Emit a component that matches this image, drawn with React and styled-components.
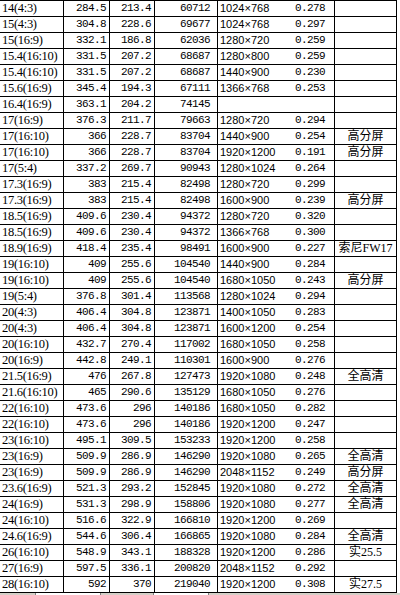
import React from 'react';
import styled, { createGlobalStyle } from 'styled-components';

const GlobalStyle = createGlobalStyle`
  html, body {
    margin: 0;
    padding: 0;
    background: #ffffff;
  }
  body {
    width: 400px;
    height: 595px;
    overflow: hidden;
  }
`;

const rows = [
  ['14(4:3)', '284.5', '213.4', '60712', '1024×768', '0.278', ''],
  ['15(4:3)', '304.8', '228.6', '69677', '1024×768', '0.297', ''],
  ['15(16:9)', '332.1', '186.8', '62036', '1280×720', '0.259', ''],
  ['15.4(16:10)', '331.5', '207.2', '68687', '1280×800', '0.259', ''],
  ['15.4(16:10)', '331.5', '207.2', '68687', '1440×900', '0.230', ''],
  ['15.6(16:9)', '345.4', '194.3', '67111', '1366×768', '0.253', ''],
  ['16.4(16:9)', '363.1', '204.2', '74145', '', '', ''],
  ['17(16:9)', '376.3', '211.7', '79663', '1280×720', '0.294', ''],
  ['17(16:10)', '366', '228.7', '83704', '1440×900', '0.254', '高分屏'],
  ['17(16:10)', '366', '228.7', '83704', '1920×1200', '0.191', '高分屏'],
  ['17(5:4)', '337.2', '269.7', '90943', '1280×1024', '0.264', ''],
  ['17.3(16:9)', '383', '215.4', '82498', '1280×720', '0.299', ''],
  ['17.3(16:9)', '383', '215.4', '82498', '1600×900', '0.239', '高分屏'],
  ['18.5(16:9)', '409.6', '230.4', '94372', '1280×720', '0.320', ''],
  ['18.5(16:9)', '409.6', '230.4', '94372', '1366×768', '0.300', ''],
  ['18.9(16:9)', '418.4', '235.4', '98491', '1600×900', '0.227', '索尼FW17'],
  ['19(16:10)', '409', '255.6', '104540', '1440×900', '0.284', ''],
  ['19(16:10)', '409', '255.6', '104540', '1680×1050', '0.243', '高分屏'],
  ['19(5:4)', '376.8', '301.4', '113568', '1280×1024', '0.294', ''],
  ['20(4:3)', '406.4', '304.8', '123871', '1400×1050', '0.283', ''],
  ['20(4:3)', '406.4', '304.8', '123871', '1600×1200', '0.254', ''],
  ['20(16:10)', '432.7', '270.4', '117002', '1680×1050', '0.258', ''],
  ['20(16:9)', '442.8', '249.1', '110301', '1600×900', '0.276', ''],
  ['21.5(16:9)', '476', '267.8', '127473', '1920×1080', '0.248', '全高清'],
  ['21.6(16:10)', '465', '290.6', '135129', '1680×1050', '0.276', ''],
  ['22(16:10)', '473.6', '296', '140186', '1680×1050', '0.282', ''],
  ['22(16:10)', '473.6', '296', '140186', '1920×1200', '0.247', ''],
  ['23(16:10)', '495.1', '309.5', '153233', '1920×1200', '0.258', ''],
  ['23(16:9)', '509.9', '286.9', '146290', '1920×1080', '0.265', '全高清'],
  ['23(16:9)', '509.9', '286.9', '146290', '2048×1152', '0.249', '高分屏'],
  ['23.6(16:9)', '521.3', '293.2', '152845', '1920×1080', '0.272', '全高清'],
  ['24(16:9)', '531.3', '298.9', '158806', '1920×1080', '0.277', '全高清'],
  ['24(16:10)', '516.6', '322.9', '166810', '1920×1200', '0.269', ''],
  ['24.6(16:9)', '544.6', '306.4', '166865', '1920×1080', '0.284', '全高清'],
  ['26(16:10)', '548.9', '343.1', '188328', '1920×1200', '0.286', '实25.5'],
  ['27(16:9)', '597.5', '336.1', '200820', '2048×1152', '0.292', ''],
  ['28(16:10)', '592', '370', '219040', '1920×1200', '0.308', '实27.5'],
];

const Sheet = styled.div`
  width: 397px;
  border-top: 1px solid #000;
  display: flex;
  flex-direction: column;
`;

const Row = styled.div`
  display: grid;
  grid-template-columns: 64px 46px 45px 63px 58px 59px 62px;
  height: 16px;
  box-sizing: border-box;
  border-bottom: 1px solid #000;
`;

const Cell = styled.div`
  box-sizing: border-box;
  height: 15px;
  line-height: 15px;
  white-space: nowrap;
  overflow: visible;
  color: #000;
  border-right: ${(p) => (p.$open ? 'none' : '1px solid #000')};
  text-align: ${(p) => p.$align || 'left'};
  padding: ${(p) => p.$pad || '0'};
`;

const Name = styled(Cell)`
  font-family: "Liberation Serif", "Times New Roman", serif;
  font-size: 12.5px;
  letter-spacing: -0.3px;
`;

const Num = styled(Cell)`
  font-family: "Liberation Mono", "DejaVu Sans Mono", monospace;
  font-size: 11px;
  letter-spacing: -0.6px;
`;

const Res = styled(Cell)`
  font-family: "Liberation Sans", Arial, sans-serif;
  font-size: 11px;
`;

const Note = styled(Cell)`
  font-family: "Liberation Serif", "Noto Sans CJK SC", serif;
  font-size: 12px;
`;

const TabStrip = styled.div`
  height: 3px;
  display: flex;
  background: #ffffff;
`;

const Tab = styled.div`
  width: ${(p) => p.$w}px;
  background: ${(p) => (p.$on ? '#d4d0c8' : '#ffffff')};
  border-left: ${(p) => (p.$edge ? '1px solid #808080' : 'none')};
`;

export default function App() {
  return (
    <>
      <GlobalStyle />
      <Sheet>
        {rows.map((r, i) => (
          <Row key={i}>
            <Name $pad="0 0 0 2px">{r[0]}</Name>
            <Num $align="right" $pad="0 3px 0 0">{r[1]}</Num>
            <Num $align="right" $pad="0 3px 0 0">{r[2]}</Num>
            <Num $align="right" $pad="0 7px 0 0">{r[3]}</Num>
            <Res $open $pad="0 0 0 2px">{r[4]}</Res>
            <Num $align="right" $pad="0 9px 0 0">{r[5]}</Num>
            <Note $align="center">{r[6]}</Note>
          </Row>
        ))}
      </Sheet>
      <TabStrip>
        <Tab $w={35} $on />
        <Tab $w={65} $edge />
        <Tab $w={53} $on $edge />
        <Tab $w={54} $edge />
        <Tab $w={193} $on $edge />
      </TabStrip>
    </>
  );
}
